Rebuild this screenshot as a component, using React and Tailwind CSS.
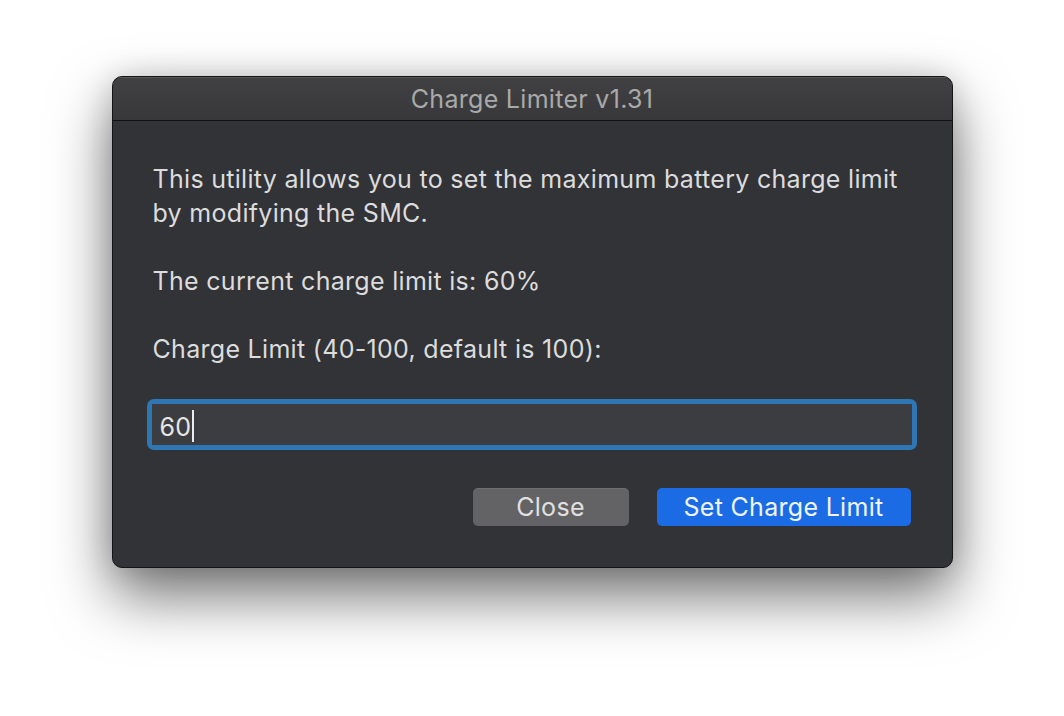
export default function App() {
  return (
    <div className="w-[1064px] h-[716px] bg-white flex items-start justify-center overflow-hidden font-['Inter',sans-serif]">
      <div className="mt-[76px] w-[841px] h-[492px] rounded-[10px] bg-[#323336] border border-[#141414] shadow-[0_28px_60px_rgba(0,0,0,0.55),0_0_30px_rgba(0,0,0,0.15)] flex flex-col overflow-hidden">
        <div className="h-[44px] shrink-0 bg-gradient-to-b from-[#414143] to-[#38383a] border-b border-[#121212] shadow-[inset_0_1px_0_rgba(255,255,255,0.12)] flex items-center justify-center">
          <span className="text-[25px] text-[#a9a9a9] tracking-[0.3px] leading-none mt-[1px]">Charge Limiter v1.31</span>
        </div>
        <div className="flex flex-col px-[40px] pt-[41px] text-[25px] tracking-[0.3px] leading-[34px] text-[#dcdcdd]">
          <p>This utility allows you to set the maximum battery charge limit<br />by modifying the SMC.</p>
          <p className="mt-[34px]">The current charge limit is: 60%</p>
          <p className="mt-[34px]">Charge Limit (40-100, default is 100):</p>
          <div className="mt-[33px] w-[770px] h-[51px] -ml-[6px] rounded-[7px] bg-[#2e77b4] p-[5px]">
            <div className="h-full bg-[#3c3d40] flex items-center pl-[8px] pt-[4px] text-[#e6e6e6]">
              <span>60</span>
              <span className="w-[2px] h-[32px] bg-[#ececec] ml-[1px] -mt-[2px]"></span>
            </div>
          </div>
          <div className="mt-[38px] flex justify-end gap-[28px] pr-[1px]">
            <button className="w-[156px] h-[38px] rounded-[5px] bg-[#636366] text-[#e0e0e0] text-[25px] tracking-[0.3px] shadow-[inset_0_1px_0_rgba(255,255,255,0.08)]">Close</button>
            <button className="w-[254px] h-[38px] rounded-[5px] bg-[#1b6ce4] text-[#f0f4fa] text-[25px] tracking-[0.3px]">Set Charge Limit</button>
          </div>
        </div>
      </div>
    </div>
  );
}
